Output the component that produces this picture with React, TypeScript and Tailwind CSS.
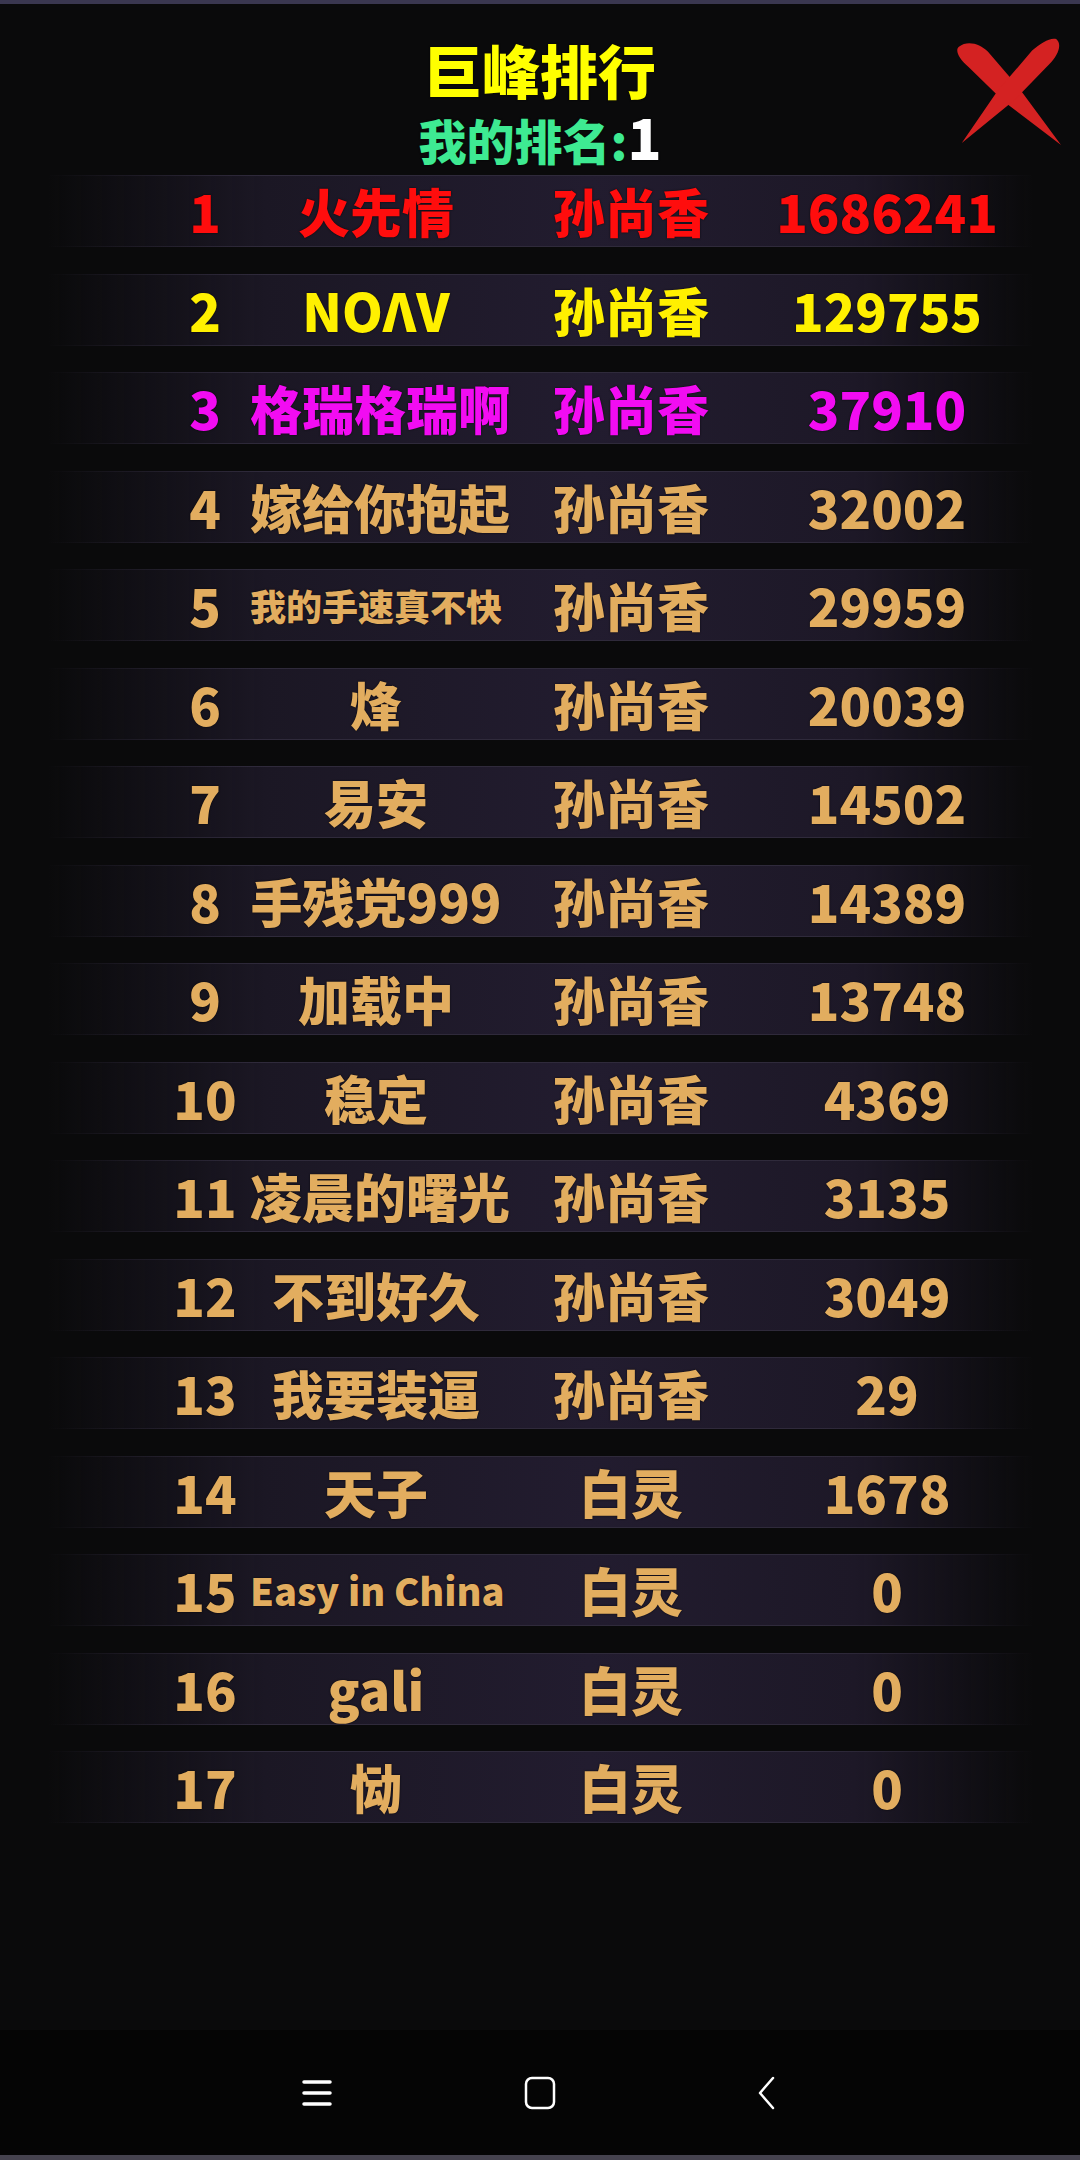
import React from "react";

type Row = {
  rank: number;
  name: string;
  hero: string;
  score: number;
  nameSize?: string;
};

const rows: Row[] = [
  { rank: 1, name: "火先情", hero: "孙尚香", score: 1686241 },
  { rank: 2, name: "NOΛV", hero: "孙尚香", score: 129755 },
  { rank: 3, name: "格瑞格瑞啊", hero: "孙尚香", score: 37910 },
  { rank: 4, name: "嫁给你抱起", hero: "孙尚香", score: 32002 },
  { rank: 5, name: "我的手速真不快", hero: "孙尚香", score: 29959, nameSize: "text-[36px]" },
  { rank: 6, name: "烽", hero: "孙尚香", score: 20039 },
  { rank: 7, name: "易安", hero: "孙尚香", score: 14502 },
  { rank: 8, name: "手残党999", hero: "孙尚香", score: 14389 },
  { rank: 9, name: "加载中", hero: "孙尚香", score: 13748 },
  { rank: 10, name: "稳定", hero: "孙尚香", score: 4369 },
  { rank: 11, name: "凌晨的曙光", hero: "孙尚香", score: 3135 },
  { rank: 12, name: "不到好久", hero: "孙尚香", score: 3049 },
  { rank: 13, name: "我要装逼", hero: "孙尚香", score: 29 },
  { rank: 14, name: "天子", hero: "白灵", score: 1678 },
  { rank: 15, name: "Easy in China", hero: "白灵", score: 0, nameSize: "text-[38px]" },
  { rank: 16, name: "gali", hero: "白灵", score: 0 },
  { rank: 17, name: "恸", hero: "白灵", score: 0 },
];

// top three get their own colours, everyone else is gold
const rankColor = (rank: number) => {
  if (rank === 1) return "text-[#ff0d0d]";
  if (rank === 2) return "text-[#fff000]";
  if (rank === 3) return "text-[#f20cf2]";
  return "text-[#e2ad5f]";
};

function CloseX() {
  return (
    <svg viewBox="0 0 110 112" className="w-[106px] h-[112px]">
      <path
        d="M3 9 C 12 2, 25 6, 33 14 L 64 50 L 109 111 L 50 66 L 13 30 C 2 21, -1 12, 3 9 Z"
        fill="#d42222"
      />
      <path
        d="M104 1 C 111 7, 105 19, 97 27 L 61 64 L 6 109 L 43 55 L 79 13 C 88 5, 98 -1, 104 1 Z"
        fill="#d42222"
      />
    </svg>
  );
}

function RankRow({ row }: { row: Row }) {
  const color = rankColor(row.rank);
  return (
    <div className="ml-[48px] w-[985px] h-[72px] pl-[112px] grid grid-cols-[90px_252px_258px_254px] items-center border-y [border-image:linear-gradient(to_right,transparent,#2f2a3b_22%,#2f2a3b_78%,transparent)_1] bg-[linear-gradient(to_right,rgba(20,17,26,0)_0%,#1b1724_22%,#221c2f_55%,#1d1827_82%,rgba(20,17,26,0)_100%)]">
      <span className={`text-center text-[52px] leading-none font-black ${color}`}>{row.rank}</span>
      <span className={`text-center whitespace-nowrap leading-none font-black ${row.nameSize ?? "text-[52px]"} ${color}`}>
        {row.name}
      </span>
      <span className={`text-center text-[52px] leading-none font-black ${color}`}>{row.hero}</span>
      <span className={`text-center text-[52px] leading-none font-black ${color}`}>{row.score}</span>
    </div>
  );
}

export default function App() {
  return (
    <div className="w-[1080px] h-[2160px] bg-[#0a0a0b] flex flex-col font-['Noto_Sans_CJK_SC','Noto_Sans',sans-serif] [text-shadow:0_0_2px_rgba(0,0,0,0.8)]">
      <div className="h-[4px] bg-[#3a3750]" />

      <div className="relative flex flex-col items-center pt-[36px]">
        <h1 className="text-[58px] leading-none font-black text-[#ffff00]">巨峰排行</h1>
        <div className="mt-[10px] flex items-baseline font-black">
          <span className="text-[48px] leading-none text-[#3eea92]">我的排名:</span>
          <span className="text-[56px] leading-none text-white">1</span>
        </div>
        <button className="absolute top-[32px] right-[18px]">
          <CloseX />
        </button>
      </div>

      <div className="mt-[11px] flex flex-col gap-[26.5px]">
        {rows.map((row) => (
          <RankRow key={row.rank} row={row} />
        ))}
      </div>

      <div className="flex-1" />

      <div className="h-[125px] bg-[#050505] flex items-center pl-[302px]">
        <svg viewBox="0 0 30 28" className="w-[30px] h-[28px]">
          <path d="M2 3 H28 M2 14 H28 M2 25 H28" stroke="white" strokeWidth="3.5" strokeLinecap="round" />
        </svg>
        <svg viewBox="0 0 32 34" className="ml-[192px] w-[32px] h-[34px]">
          <rect x="2" y="2" width="28" height="30" rx="6" fill="none" stroke="white" strokeWidth="2.5" />
        </svg>
        <svg viewBox="0 0 20 34" className="ml-[200px] w-[20px] h-[34px]">
          <path d="M17 2 L4 17 L17 32" fill="none" stroke="white" strokeWidth="2.5" strokeLinecap="round" strokeLinejoin="round" />
        </svg>
      </div>
      <div className="h-[5px] bg-[#46434f]" />
    </div>
  );
}
